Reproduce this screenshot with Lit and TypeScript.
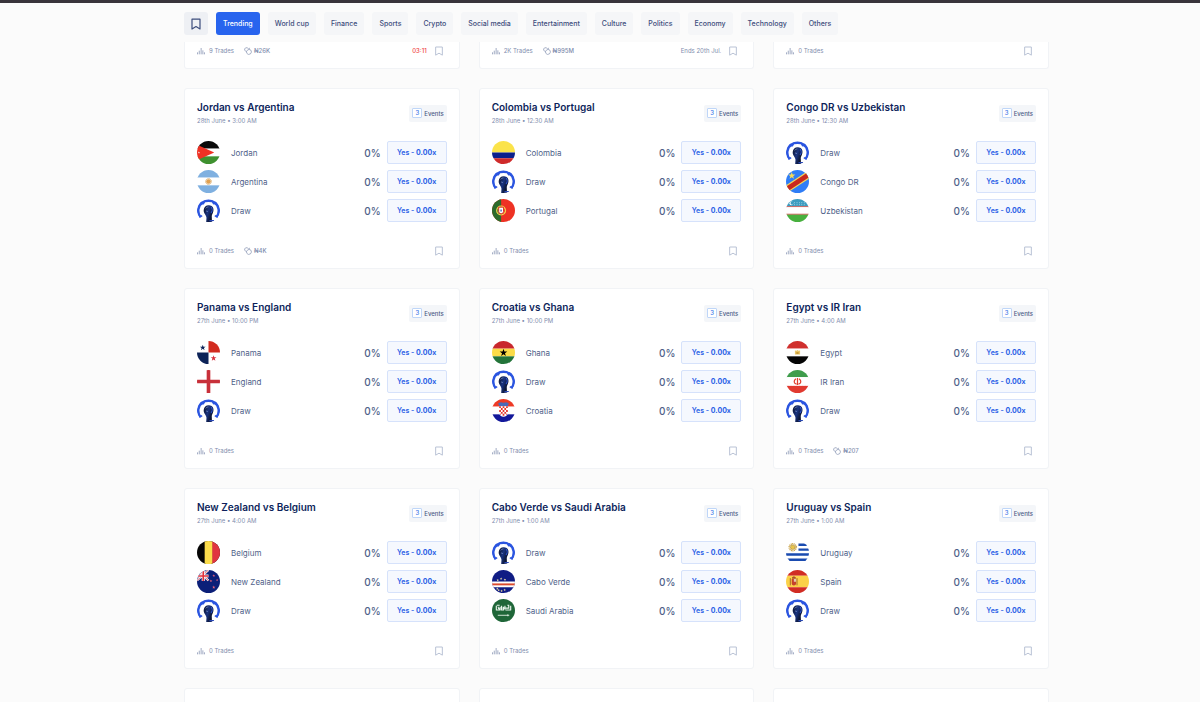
import { LitElement, html, css, svg, nothing, type TemplateResult } from "lit";
import { customElement, property, state } from "lit/decorators.js";
import { classMap } from "lit/directives/class-map.js";

interface Market {
  title: string;
  date: string;
  teams: string[];
  volume?: string;
}

const STAR = "M0-1 .23-.31 .95-.31 .37.12 .59.81 0 .38-.59.81-.37.12-.95-.31-.23-.31Z";
const star = (x: number, y: number, r: number, fill: string) =>
  svg`<path d=${STAR} transform=${`translate(${x} ${y}) scale(${r})`} fill=${fill} />`;

const bands = (...rows: [string, number, number][]) =>
  rows.map(([c, y, h]) => svg`<rect x="0" y=${y} width="24" height=${h} fill=${c} />`);

const FLAGS: Record<string, TemplateResult> = {
  Jordan: svg`${bands(["#0a0a0a", 0, 8], ["#fff", 8, 8], ["#3f9130", 16, 8])}<path d="M-2 3 18 12-2 21Z" fill="#ef3124"/>${star(2, 12, 1.2, "#fff")}`,
  Argentina: svg`${bands(["#7fb0e0", 0, 8], ["#fff", 8, 8], ["#7fb0e0", 16, 8])}<circle cx="12" cy="12" r="2.4" fill="#e0a050"/><circle cx="12" cy="12" r="3" fill="none" stroke="#d09848" stroke-width=".9" stroke-dasharray=".9 .4"/>`,
  Colombia: svg`${bands(["#fbe34a", 0, 12], ["#0b1f8c", 12, 6], ["#cf2b2b", 18, 6])}`,
  Portugal: svg`<rect width="24" height="24" fill="#ee3224"/><rect width="9.5" height="24" fill="#2c6b2c"/><circle cx="9.5" cy="12" r="4.6" fill="none" stroke="#f2d24c" stroke-width="1.3"/><path d="M5.5 9.5 13.5 14.5M5.5 14.5 13.5 9.5" stroke="#f2d24c" stroke-width=".7"/><path d="M7 8.5h5v4.5a2.5 2.5 0 0 1-5 0Z" fill="#fff" stroke="#e03028" stroke-width="1"/><path d="M8.6 11h1.8v2H8.6Z" fill="#6a7fc0"/>`,
  "Congo DR": svg`<rect width="24" height="24" fill="#2f7df6"/><path d="M-1 21 25 4" stroke="#f3d85a" stroke-width="7.4"/><path d="M-1 21 25 4" stroke="#c8281f" stroke-width="5"/>${star(6, 6, 4, "#f7dc5b")}`,
  Uzbekistan: svg`${bands(["#3d9cc0", 0, 7.6], ["#c8443a", 7.6, 1], ["#fff", 8.6, 6.8], ["#c8443a", 15.4, 1], ["#48b03e", 16.4, 8])}<circle cx="5.6" cy="4.5" r="2" fill="#fff"/><circle cx="6.4" cy="4.3" r="1.7" fill="#3d9cc0"/><g fill="#d8eef6">${[9, 11.5, 14, 16.5, 19].map((x) => svg`<circle cx=${x} cy="6" r=".5"/><circle cx=${x} cy="4" r=".5"/>`)}</g>`,
  Panama: svg`<rect width="24" height="24" fill="#fff"/><path d="M12 0h12v12H12Z" fill="#d22b1f"/><path d="M0 12h12v12H0Z" fill="#0d2358"/>${star(6, 7, 3.2, "#0d2358")}${star(17.3, 18, 3.2, "#d8303c")}`,
  England: svg`<rect width="24" height="24" fill="#fff"/><path d="M12 0v24M0 12h24" stroke="#c8303a" stroke-width="3.8"/>`,
  Ghana: svg`${bands(["#c9272d", 0, 8], ["#fbdc48", 8, 8], ["#23743a", 16, 8])}${star(12, 12.2, 4.2, "#000")}`,
  Croatia: svg`${bands(["#ee3a26", 0, 8], ["#fff", 8, 8], ["#13189a", 16, 8])}<path d="M6.5 4.500 9 3.400 12 4 15 3.400 17.500 4.500 16.500 7.500H7.500Z" fill="#4a6ab8"/><path d="M7.500 7.500H16.500V14a4.500 4.500 0 0 1-9 0Z" fill="#fff"/><g fill="#e5352b"><path d="M7.500 7.500h1.800v2H7.500zM11.100 7.500h1.800v2h-1.800zM14.700 7.500h1.800v2h-1.800zM9.300 9.500h1.800v2H9.300zM12.900 9.500h1.800v2h-1.800zM7.500 11.500h1.800v2H7.500zM11.100 11.500h1.800v2h-1.800zM14.700 11.500h1.800v2h-1.800zM9.300 13.500h1.800v2H9.300zM12.900 13.500h1.800v2h-1.800zM11.100 15.500h1.800v2h-1.800zM8 15.500h1.300v1.500zM14.700 15.500H16l-1.300 1.500z"/></g>`,
  Egypt: svg`${bands(["#d0302e", 0, 8], ["#fff", 8, 8], ["#050505", 16, 8])}<path d="M9.300 9.800 11 10.300 12 9.300l1 1 1.700-.5v4.400H9.300Z" fill="#e8c568"/><path d="M10.800 11.500h2.400v2h-2.400Z" fill="#c99b38"/>`,
  "IR Iran": svg`${bands(["#3f9d4c", 0, 7.5], ["#fff", 7.5, 9], ["#e13a30", 16.5, 8])}<path d="M0 7.900h24M0 16.100h24" stroke="#fff" stroke-width=".6" stroke-dasharray=".8 .8"/><path d="M12 8.400v7.200M10.400 9.200c-2.800 2-2.300 5 .6 5.600M13.600 9.200c2.800 2 2.300 5-.6 5.600" fill="none" stroke="#e0402f" stroke-width="1.300"/>`,
  Belgium: svg`<rect width="24" height="24" fill="#050505"/><rect x="8" width="8.500" height="24" fill="#fbdc4b"/><rect x="16" width="8" height="24" fill="#e03540"/>`,
  "New Zealand": svg`<rect width="24" height="24" fill="#0b1f78"/><path d="M0 0 12 11M12 0 0 11" stroke="#fff" stroke-width="2.200"/><path d="M0 0 12 11M12 0 0 11" stroke="#d83440" stroke-width=".8"/><path d="M6.500 0v11.500M0 6.200h12" stroke="#fff" stroke-width="3.200"/><path d="M6.500 0v11.500M0 6.200h12" stroke="#e0303c" stroke-width="1.700"/>${star(17.5, 6, 1.6, "#e8627a")}${star(14.5, 11.5, 1.6, "#e8627a")}${star(21, 10.5, 1.4, "#e8627a")}${star(17.5, 18, 1.8, "#e8627a")}`,
  "Cabo Verde": svg`<rect width="24" height="24" fill="#101c84"/>${bands(["#fff", 12, 6], ["#dc4a2c", 14, 2])}${[[9.5, 9], [13.5, 10.2], [6, 10.6], [5.5, 19.5], [7, 21], [10, 21.8], [13.2, 20.8]].map(([x, y]) => star(x, y, 1.4, "#f5e6a8"))}`,
  "Saudi Arabia": svg`<rect width="24" height="24" fill="#1f6638"/><path d="M4.500 7v4M6.500 8c0 3 2 3 2 0v3.500M10 7v4.500h2V8M13.500 7v4M15 9.500h2.500V7M19.500 7v4.500M4 11.500h5M11 9.500h4M14 11.500h6M5 6.500h3M16 6.500h2" fill="none" stroke="#e8f3ea" stroke-width="1.200"/><path d="M6 17h12M16.500 16v2" stroke="#e8f3ea" stroke-width=".9"/>`,
  Uruguay: svg`<rect width="24" height="24" fill="#fff"/><path d="M13 4h11M13 9h11M0 14h24M0 19.500h24" stroke="#1a4bb0" stroke-width="2.600"/><circle cx="7" cy="6.500" r="3.600" fill="none" stroke="#c9a040" stroke-width="1.700" stroke-dasharray="1 .6"/><circle cx="7" cy="6.500" r="2.400" fill="#e8c44c" stroke="#8a6a20" stroke-width=".4"/>`,
  Spain: svg`${bands(["#d12c24", 0, 6], ["#fbd148", 6, 12], ["#d12c24", 18, 6])}<path d="M4.500 8.500v7.500M11.500 8.500v7.500" stroke="#a4632c" stroke-width="1"/><path d="M6 9.500h4.500v4.500a2.200 2.200 0 0 1-4.500 0Z" fill="#c4412c"/><path d="M8.200 9.500h2.300v2.700H8.200Z" fill="#e6c8b0"/><path d="M6.300 7.500 8.200 6.500l2 1v1.500H6.300Z" fill="#a8522c"/>`,
  Draw: svg`<defs><linearGradient id="cup" x1="0" y1="0" x2="1" y2=".6"><stop offset="0" stop-color="#0a1024"/><stop offset=".5" stop-color="#1a3480"/><stop offset="1" stop-color="#070b18"/></linearGradient></defs><rect width="24" height="24" fill="#fff"/><path d="M3.400 18.600A10.800 10.800 0 0 1 6 3.200M20.600 18.600A10.800 10.800 0 0 0 18 3.200" fill="none" stroke="#2b55e0" stroke-width="2.700"/><path d="M3.500 4A12 12 0 0 1 20.500 4L18.500 5.500 17 5.800 15.400 3.400Q12 2.600 8.600 3.400L7 5.800 5.500 5.800Z" fill="#2b55e0"/><path d="M1.800 19.600 5.400 17.400M22.200 19.600 18.600 17.400" stroke="#2b55e0" stroke-width="1.500"/><path d="M7 11.500C7.300 7.900 9.600 6.300 12.600 6.500c3.300.2 5.100 2.600 4.500 6-.4 2.400-1.500 3.300-1.700 5.300l.2 6.200H9.600l.3-4.500C9.700 16.500 6.700 15.200 7 11.500Z" fill="url(#cup)"/><path d="M14.700 8.500c1.600 1.700 1.400 4.400-.1 6" fill="none" stroke="#2f58dd" stroke-width="1.100"/><path d="M13 22.600h4.800" fill="none" stroke="#2746b4" stroke-width="1.600"/><path d="M9 9.800q1.200-1.600 3-1.600M9.500 12.500l2 .6" fill="none" stroke="#7f97d2" stroke-width=".7"/>`,
};

const bookmarkIcon = svg`<svg class="icon" viewBox="0 0 12 12" aria-hidden="true"><path d="M2 1.200h8v9.800L6 8.600 2 11Z" fill="none" stroke="currentColor" stroke-width="1.200" stroke-linejoin="round"/></svg>`;
const tradesIcon = svg`<svg class="icon" viewBox="0 0 12 12" aria-hidden="true"><path d="M.8 11V8M3.400 11V5.500M6.200 11V1.500M8.800 11V5M11.200 11V8" fill="none" stroke="currentColor" stroke-width="1.100"/></svg>`;
const coinsIcon = svg`<svg class="icon" viewBox="0 0 12 12" aria-hidden="true"><path d="M4 7.200 1 5Q.5 2.600 2.200 1.400L5 1l1.800 2M5 4.800 7.600 3.600 8.400 1.200M7.600 3.600l2.800 1.200.8 2.800-1.600 2.800-3.200.8-2.200-1.800-.4-2.600L5 4.800" fill="none" stroke="currentColor" stroke-width="1" stroke-linejoin="round"/></svg>`;

const shared = css`
  :host,
  * {
    box-sizing: border-box;
  }
  button {
    margin: 0;
    font: inherit;
    cursor: pointer;
  }
  .icon {
    display: block;
    width: 100%;
    height: 100%;
  }
`;

@customElement("market-footer")
export class MarketFooter extends LitElement {
  @property() trades = "0";
  @property() volume = "";
  @property() note = "";
  @property({ type: Boolean }) live = false;

  static styles = [
    shared,
    css`
      :host {
        display: flex;
        align-items: center;
        height: 11px;
        font-size: 6px;
        line-height: 11px;
        color: #7f8dae;
      }
      .stat {
        display: flex;
        align-items: center;
        gap: 4px;
        margin-right: 10px;
      }
      .glyph {
        width: 8px;
        height: 8px;
      }
      .volume {
        gap: 2px;
        font-weight: 500;
      }
      .end {
        display: flex;
        align-items: center;
        gap: 7px;
        margin-left: auto;
      }
      .live {
        color: #ef4444;
        font-weight: 500;
      }
      .save {
        width: 10px;
        height: 10px;
        margin-right: 3px;
        padding: 0;
        border: 0;
        background: none;
        color: #b9c2d5;
      }
    `,
  ];

  render() {
    return html`
      <span class="stat"><span class="glyph">${tradesIcon}</span>${this.trades} Trades</span>
      ${this.volume
        ? html`<span class="stat volume"><span class="glyph">${coinsIcon}</span>₦${this.volume}</span>`
        : nothing}
      <span class="end">
        ${this.note ? html`<span class=${classMap({ live: this.live })}>${this.note}</span>` : nothing}
        <button class="save" aria-label="Save market">${bookmarkIcon}</button>
      </span>
    `;
  }
}

@customElement("market-card")
export class MarketCard extends LitElement {
  @property({ attribute: false }) market!: Market;

  static styles = [
    shared,
    css`
      :host {
        display: block;
        padding: 11px 12px 12px;
        border: 1px solid #f1f3f6;
        border-radius: 3px;
        background: #fff;
      }
      .head {
        display: flex;
        align-items: center;
        justify-content: space-between;
        margin-bottom: 15px;
      }
      .title {
        margin: 0 0 2px;
        font-size: 10px;
        line-height: 14px;
        font-weight: 600;
        color: #0d1f5b;
      }
      .date {
        margin: 0;
        font-size: 6px;
        line-height: 10px;
        color: #7f8dae;
      }
      .badge {
        display: flex;
        align-items: center;
        gap: 2px;
        height: 17px;
        padding: 0 3px;
        border-radius: 2px;
        background: #f4f6f9;
        font-size: 6px;
        font-weight: 500;
        color: #4d5c86;
      }
      .count {
        width: 10px;
        height: 10px;
        border: 1px solid #bfd6f8;
        border-radius: 1px;
        background: #fff;
        line-height: 8px;
        text-align: center;
        color: #3b76e8;
      }
      .teams {
        display: grid;
        gap: 6px;
        margin: 0 0 23px;
        padding: 0;
        list-style: none;
      }
      .team {
        display: flex;
        align-items: center;
        height: 23px;
      }
      .flag {
        width: 23px;
        height: 23px;
        border-radius: 50%;
      }
      .name {
        flex: 1;
        margin-left: 11px;
        font-size: 8px;
        color: #4f5f89;
      }
      .odds {
        margin-right: 6px;
        font-size: 10px;
        font-weight: 500;
        color: #4f5f89;
      }
      .yes {
        width: 60px;
        height: 23px;
        padding: 0;
        border: 1px solid #d6e2fb;
        border-radius: 2px;
        background: #f5f8fe;
        font-size: 7px;
        font-weight: 600;
        color: #2a5fe6;
      }
      .price {
        font-weight: 700;
      }
    `,
  ];

  render() {
    const m = this.market;
    return html`
      <header class="head">
        <div>
          <h2 class="title">${m.title}</h2>
          <p class="date">${m.date}</p>
        </div>
        <span class="badge"><span class="count">${m.teams.length}</span>Events</span>
      </header>
      <ul class="teams">
        ${m.teams.map(
          (team) => html`
            <li class="team">
              <svg class="flag" viewBox="0 0 24 24" aria-hidden="true">${FLAGS[team]}</svg>
              <span class="name">${team}</span>
              <span class="odds">0%</span>
              <button class="yes">Yes - <b class="price">0.00x</b></button>
            </li>
          `
        )}
      </ul>
      <market-footer volume=${m.volume ?? ""}></market-footer>
    `;
  }
}

@customElement("app-root")
export class AppRoot extends LitElement {
  @state() private active = "Trending";

  private categories = [
    "Trending", "World cup", "Finance", "Sports", "Crypto", "Social media",
    "Entertainment", "Culture", "Politics", "Economy", "Technology", "Others",
  ];

  private markets: Market[] = [
    { title: "Jordan vs Argentina", date: "28th June • 3:00 AM", teams: ["Jordan", "Argentina", "Draw"], volume: "4K" },
    { title: "Colombia vs Portugal", date: "28th June • 12:30 AM", teams: ["Colombia", "Draw", "Portugal"] },
    { title: "Congo DR vs Uzbekistan", date: "28th June • 12:30 AM", teams: ["Draw", "Congo DR", "Uzbekistan"] },
    { title: "Panama vs England", date: "27th June • 10:00 PM", teams: ["Panama", "England", "Draw"] },
    { title: "Croatia vs Ghana", date: "27th June • 10:00 PM", teams: ["Ghana", "Draw", "Croatia"] },
    { title: "Egypt vs IR Iran", date: "27th June • 4:00 AM", teams: ["Egypt", "IR Iran", "Draw"], volume: "207" },
    { title: "New Zealand vs Belgium", date: "27th June • 4:00 AM", teams: ["Belgium", "New Zealand", "Draw"] },
    { title: "Cabo Verde vs Saudi Arabia", date: "27th June • 1:00 AM", teams: ["Draw", "Cabo Verde", "Saudi Arabia"] },
    { title: "Uruguay vs Spain", date: "27th June • 1:00 AM", teams: ["Uruguay", "Spain", "Draw"] },
  ];

  static styles = [
    shared,
    css`
      :host {
        display: flex;
        flex-direction: column;
        height: 100vh;
        overflow: hidden;
        border-top: 3px solid #39343b;
        background: #fbfbfb;
        font-family: Inter, "Liberation Sans", sans-serif;
      }
      .nav {
        display: flex;
        flex: none;
        gap: 8px;
        padding: 9px 151px 7px 184px;
      }
      .chip {
        height: 23px;
        padding: 0 7px;
        border: 0;
        border-radius: 3px;
        background: #f5f6f8;
        font-size: 7px;
        font-weight: 500;
        color: #3d4d7c;
        white-space: nowrap;
      }
      .active {
        background: #2864ee;
        color: #fff;
      }
      .saved {
        width: 24px;
        padding: 0 6px;
        background: #eef0f4;
      }
      .saved .icon {
        height: 12px;
      }
      .feed {
        display: grid;
        flex: none;
        grid-template-columns: repeat(3, minmax(0, 1fr));
        gap: 19px;
        padding: 0 151px 0 184px;
      }
      .tail {
        padding: 3px 12px 12px;
        border: 1px solid #f1f3f6;
        border-top: 0;
        border-radius: 0 0 3px 3px;
        background: #fff;
      }
      .next {
        height: 181px;
        border: 1px solid #f1f3f6;
        border-radius: 3px;
        background: #fff;
      }
    `,
  ];

  render() {
    return html`
      <nav class="nav" aria-label="Categories">
        <button class="chip saved" aria-label="Saved markets">${bookmarkIcon}</button>
        ${this.categories.map(
          (name) => html`<button
            class=${classMap({ chip: true, active: name === this.active })}
            @click=${() => (this.active = name)}
          >${name}</button>`
        )}
      </nav>
      <main class="feed">
        <div class="tail"><market-footer trades="9" volume="26K" note="03:11" live></market-footer></div>
        <div class="tail"><market-footer trades="2K" volume="995M" note="Ends 20th Jul."></market-footer></div>
        <div class="tail"><market-footer></market-footer></div>
        ${this.markets.map((market) => html`<market-card .market=${market}></market-card>`)}
        <div class="next"></div>
        <div class="next"></div>
        <div class="next"></div>
      </main>
    `;
  }
}
